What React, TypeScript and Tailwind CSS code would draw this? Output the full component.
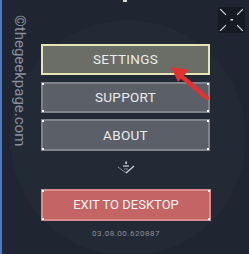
import React from "react";

function Corners() {
  return (
    <>
      <span className="absolute -left-px -top-px h-[2px] w-[2px] bg-white" />
      <span className="absolute -right-px -top-px h-[2px] w-[2px] bg-white" />
      <span className="absolute -left-px -bottom-px h-[2px] w-[2px] bg-white" />
      <span className="absolute -right-px -bottom-px h-[2px] w-[2px] bg-white" />
    </>
  );
}

export default function App() {
  return (
    <div
      className="relative w-[249px] h-[254px] overflow-hidden bg-[#1f2631] border-l-2 border-[#4a7bcf]"
      style={{ fontFamily: "Roboto, 'Liberation Sans', sans-serif" }}
    >
      {/* faint background circle */}
      <div className="absolute left-[8px] top-[20px] w-[236px] h-[236px] rounded-full bg-[#222a35]" />

      {/* top mark */}
      <div className="absolute left-[121px] top-0 h-[2px] w-[4px] bg-[#d8d8d8]" />

      {/* watermark */}
      <div className="absolute left-[11px] top-[15px] origin-top-left rotate-90 translate-x-[14px] whitespace-nowrap text-[15px] leading-[15px] text-[#8a8f9c]">
        ©thegeekpage.com
      </div>

      {/* expand icon */}
      <div className="absolute left-[216px] top-[7px] w-[27px] h-[26px] bg-[#161b22]">
        <svg width="27" height="26" viewBox="0 0 27 26" className="block">
          <g stroke="#d0d4da" strokeWidth="1.2" strokeLinecap="square">
            <line x1="2.5" y1="2.5" x2="7.5" y2="7.5" />
            <line x1="24.5" y1="2.5" x2="19.5" y2="7.5" />
            <line x1="2.5" y1="23.5" x2="7.5" y2="18.5" />
            <line x1="24.5" y1="23.5" x2="19.5" y2="18.5" />
          </g>
          <rect x="12.5" y="12" width="2.5" height="1.5" fill="#e0e0e0" />
        </svg>
      </div>

      <div className="relative flex flex-col pl-[39px] pt-[44px] w-[208px]">
        <button className="h-[31px] w-[169px] border-2 border-[#e6e6b4] bg-[#6b6e67] text-[13.5px] tracking-[0.3px] text-[#ececec] flex items-center justify-center">
          SETTINGS
        </button>
        <button className="relative mt-[7px] h-[31px] w-[169px] border-2 border-[#80838b] bg-[#5b5f68] text-[13.5px] tracking-[0.3px] text-[#ececec] flex items-center justify-center">
          SUPPORT
          <Corners />
        </button>
        <button className="relative mt-[6px] h-[32px] w-[169px] border-2 border-[#80838b] bg-[#5b5f68] text-[13.5px] tracking-[0.3px] text-[#ececec] flex items-center justify-center">
          ABOUT
          <Corners />
        </button>

        <div className="mt-[9px] flex w-[169px] justify-center">
          <svg width="18" height="14" viewBox="0 0 18 14" className="block">
            <line x1="1" y1="7" x2="9" y2="13" stroke="#8a8f9a" strokeWidth="1" />
            <line x1="9" y1="13" x2="17" y2="6" stroke="#d5d8dd" strokeWidth="1.2" />
            <line x1="6" y1="6" x2="12" y2="6" stroke="#d5d8dd" strokeWidth="1.2" />
            <rect x="8.3" y="1.5" width="1.6" height="2.5" fill="#d5d8dd" />
            <line x1="7" y1="9" x2="11" y2="9" stroke="#8a8f9a" strokeWidth="1" />
          </svg>
        </div>

        <button className="relative mt-[15px] h-[32px] w-[170px] border-2 border-[#d98c8a] bg-[#c46464] text-[13px] text-[#f4f4f4] flex items-center justify-center">
          EXIT TO DESKTOP
          <Corners />
        </button>

        <div className="mt-[8px] w-[170px] text-center text-[8px] leading-[10px] tracking-[0.5px] text-[#8a8f99]">
          03.08.00.620887
        </div>
      </div>

      {/* red arrow annotation */}
      <svg className="absolute left-0 top-0" width="249" height="254" viewBox="0 0 249 254">
        <line x1="205" y1="98" x2="178" y2="75" stroke="#e3312f" strokeWidth="4.5" strokeLinecap="round" />
        <polygon points="169,67 187,70 176,82" fill="#e3312f" />
      </svg>
    </div>
  );
}
